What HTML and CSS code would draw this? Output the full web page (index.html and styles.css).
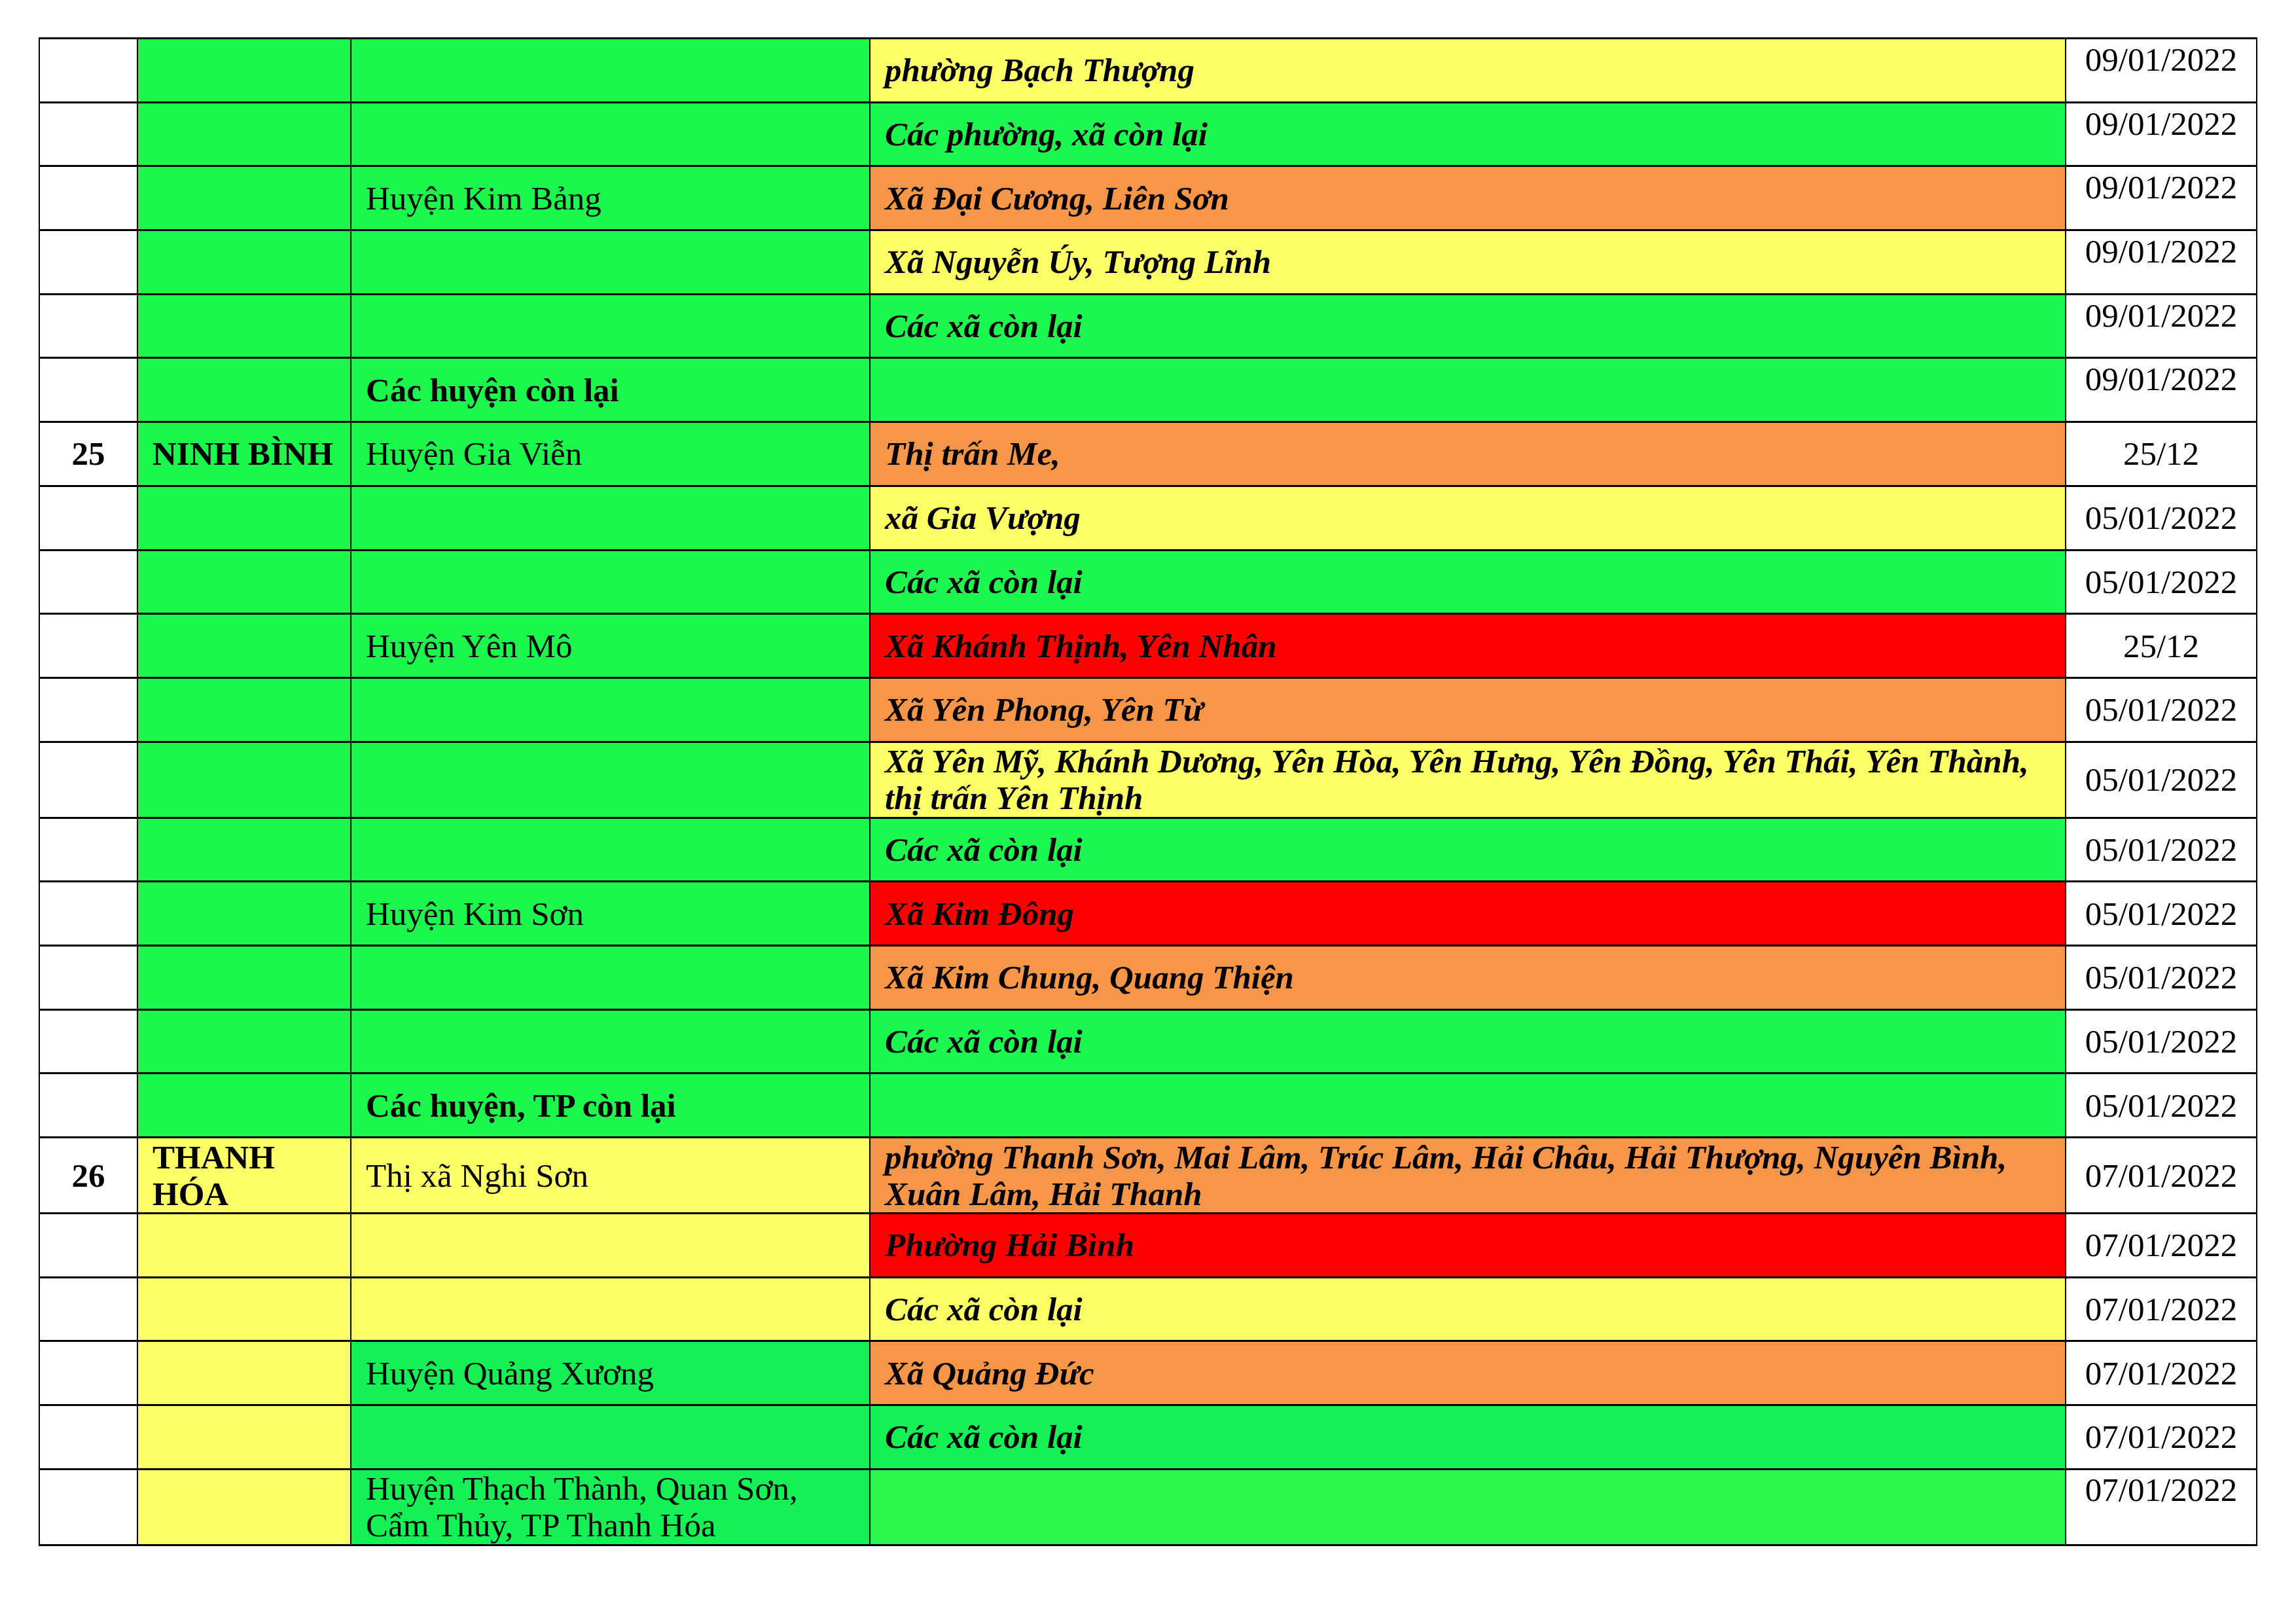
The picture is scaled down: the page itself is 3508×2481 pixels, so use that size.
FILE: index.html
```html
<!DOCTYPE html>
<html lang="vi">
<head>
<meta charset="utf-8">
<title>Bảng phân loại cấp độ dịch</title>
<link rel="stylesheet" href="styles.css">
</head>
<body>
<table class="grid">
  <colgroup>
    <col class="c-no">
    <col class="c-prov">
    <col class="c-dist">
    <col class="c-ward">
    <col class="c-date">
  </colgroup>
  <tbody>
    <tr class="r1">
      <td class="no"></td><td class="g1"></td><td class="g1"></td>
      <td class="ward yl">phường Bạch Thượng</td><td class="date top">09/01/2022</td>
    </tr>
    <tr class="r1">
      <td class="no"></td><td class="g1"></td><td class="g1"></td>
      <td class="ward gw">Các phường, xã còn lại</td><td class="date top">09/01/2022</td>
    </tr>
    <tr class="r1">
      <td class="no"></td><td class="g1"></td><td class="dist g1">Huyện Kim Bảng</td>
      <td class="ward or">Xã Đại Cương, Liên Sơn</td><td class="date top">09/01/2022</td>
    </tr>
    <tr class="r1">
      <td class="no"></td><td class="g1"></td><td class="g1"></td>
      <td class="ward yl">Xã Nguyễn Úy, Tượng Lĩnh</td><td class="date top">09/01/2022</td>
    </tr>
    <tr class="r1">
      <td class="no"></td><td class="g1"></td><td class="g1"></td>
      <td class="ward gw">Các xã còn lại</td><td class="date top">09/01/2022</td>
    </tr>
    <tr class="r1">
      <td class="no"></td><td class="g1"></td><td class="dist b g1">Các huyện còn lại</td>
      <td class="ward gw"></td><td class="date top">09/01/2022</td>
    </tr>
    <tr class="r1">
      <td class="no b">25</td><td class="prov g1">NINH BÌNH</td><td class="dist g1">Huyện Gia Viễn</td>
      <td class="ward or">Thị trấn Me,</td><td class="date">25/12</td>
    </tr>
    <tr class="r1">
      <td class="no"></td><td class="g1"></td><td class="g1"></td>
      <td class="ward yl">xã Gia Vượng</td><td class="date">05/01/2022</td>
    </tr>
    <tr class="r1">
      <td class="no"></td><td class="g1"></td><td class="g1"></td>
      <td class="ward gw">Các xã còn lại</td><td class="date">05/01/2022</td>
    </tr>
    <tr class="r1">
      <td class="no"></td><td class="g1"></td><td class="dist g1">Huyện Yên Mô</td>
      <td class="ward rd">Xã Khánh Thịnh, Yên Nhân</td><td class="date">25/12</td>
    </tr>
    <tr class="r1">
      <td class="no"></td><td class="g1"></td><td class="g1"></td>
      <td class="ward or">Xã Yên Phong, Yên Từ</td><td class="date">05/01/2022</td>
    </tr>
    <tr class="r2">
      <td class="no"></td><td class="g1"></td><td class="g1"></td>
      <td class="ward yl">Xã Yên Mỹ, Khánh Dương, Yên Hòa, Yên Hưng, Yên Đồng, Yên Thái, Yên Thành,<br>thị trấn Yên Thịnh</td><td class="date">05/01/2022</td>
    </tr>
    <tr class="r1">
      <td class="no"></td><td class="g1"></td><td class="g1"></td>
      <td class="ward gw">Các xã còn lại</td><td class="date">05/01/2022</td>
    </tr>
    <tr class="r1">
      <td class="no"></td><td class="g1"></td><td class="dist g1">Huyện Kim Sơn</td>
      <td class="ward rd">Xã Kim Đông</td><td class="date">05/01/2022</td>
    </tr>
    <tr class="r1">
      <td class="no"></td><td class="g1"></td><td class="g1"></td>
      <td class="ward or">Xã Kim Chung, Quang Thiện</td><td class="date">05/01/2022</td>
    </tr>
    <tr class="r1">
      <td class="no"></td><td class="g1"></td><td class="g1"></td>
      <td class="ward gw">Các xã còn lại</td><td class="date">05/01/2022</td>
    </tr>
    <tr class="r1">
      <td class="no"></td><td class="g1"></td><td class="dist b g1">Các huyện, TP còn lại</td>
      <td class="ward gw"></td><td class="date">05/01/2022</td>
    </tr>
    <tr class="r2">
      <td class="no b">26</td><td class="prov yl">THANH HÓA</td><td class="dist yl">Thị xã Nghi Sơn</td>
      <td class="ward or">phường Thanh Sơn, Mai Lâm, Trúc Lâm, Hải Châu, Hải Thượng, Nguyên Bình,<br>Xuân Lâm, Hải Thanh</td><td class="date">07/01/2022</td>
    </tr>
    <tr class="r1">
      <td class="no"></td><td class="yl"></td><td class="yl"></td>
      <td class="ward rd">Phường Hải Bình</td><td class="date">07/01/2022</td>
    </tr>
    <tr class="r1">
      <td class="no"></td><td class="yl"></td><td class="yl"></td>
      <td class="ward yl">Các xã còn lại</td><td class="date">07/01/2022</td>
    </tr>
    <tr class="r1">
      <td class="no"></td><td class="yl"></td><td class="dist g2">Huyện Quảng Xương</td>
      <td class="ward or">Xã Quảng Đức</td><td class="date">07/01/2022</td>
    </tr>
    <tr class="r1">
      <td class="no"></td><td class="yl"></td><td class="g2"></td>
      <td class="ward g2">Các xã còn lại</td><td class="date">07/01/2022</td>
    </tr>
    <tr class="r2">
      <td class="no"></td><td class="yl"></td><td class="dist g2">Huyện Thạch Thành, Quan Sơn,<br>Cẩm Thủy, TP Thanh Hóa</td>
      <td class="ward g3"></td><td class="date top">07/01/2022</td>
    </tr>
  </tbody>
</table>
</body>
</html>
```
FILE: styles.css
```css
html, body {
  margin: 0;
  padding: 0;
  background: #ffffff;
}

body {
  font-family: "Liberation Serif", "Times New Roman", serif;
  font-size: 51px;
  line-height: 58px;
  color: #000000;
}

.grid {
  border-collapse: collapse;
  table-layout: fixed;
  width: 3390px;
  margin: 57px 0 0 59px;
}

.c-no { width: 150px; }
.c-prov { width: 326px; }
.c-dist { width: 793px; }
.c-ward { width: 1827px; }
.c-date { width: 292px; }

.grid td {
  border-left: 2px solid #000;
  border-right: 2px solid #000;
  border-top: 3px solid #000;
  border-bottom: 3px solid #000;
  padding: 0 22px;
  vertical-align: middle;
  text-align: left;
  white-space: nowrap;
  overflow: hidden;
}

.r1 { height: 97.7px; }
.r2 { height: 116px; }
.r2 td { line-height: 56px; }

.grid td.no {
  text-align: center;
  background: #ffffff;
}

.grid td.b { font-weight: bold; }

.grid td.prov { font-weight: bold; white-space: normal; }

.grid td.ward {
  font-weight: bold;
  font-style: italic;
}

.grid td.date {
  text-align: center;
  background: #ffffff;
  padding: 0 4px;
}

.grid td.top {
  vertical-align: top;
  padding-top: 2px;
}

.g1 { background: #1af84e; }
.gw { background: #1bf84f; }
.g2 { background: #13f157; }
.g3 { background: #2af74a; }
.yl { background: #ffff66; }
.or { background: #f79646; }
.rd { background: #ff0000; }
```
